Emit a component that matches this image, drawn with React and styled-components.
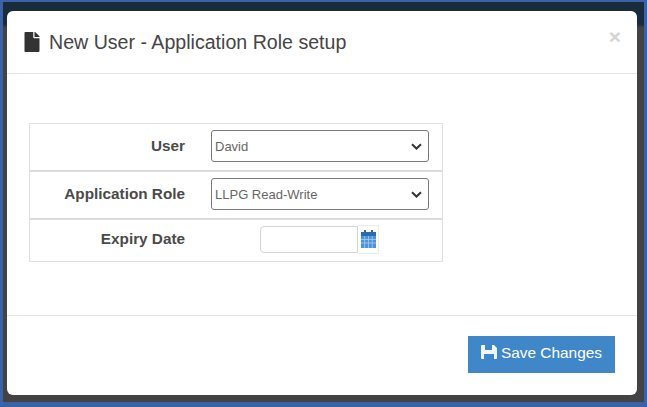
import React from "react";
import styled, { createGlobalStyle } from "styled-components";
import { FaFile } from "react-icons/fa";

const Global = createGlobalStyle`
html, body {
  margin: 0;
  padding: 0;
  background: #3a62a8;
}
* {
  box-sizing: border-box;
}
`

const Frame = styled.div`
width: 647px;
height: 407px;
border: solid #3a62a8;
border-width: 2px 3px 5px 3px;
padding: 9px 7px 7px 4px;
background: linear-gradient(#182c3e 0, #182c3e 22px, #434343 26px, #434343 100%);
font-family: "Liberation Sans", Arial, sans-serif;
overflow: hidden;
`

const Modal = styled.div`
width: 630px;
height: 384px;
background: #fff;
border-radius: 6px;
display: flex;
flex-direction: column;
`

const Header = styled.div`
height: 63px;
flex: none;
display: flex;
align-items: center;
padding: 0 16px 0 17px;
border-bottom: 1px solid #e5e5e5;
`

const TitleIcon = styled(FaFile)`
width: 16px;
height: 20px;
color: #333;
margin-right: 9px;
flex: none;
`

const Title = styled.h4`
margin: 0;
flex: 1;
font-size: 19.6px;
font-weight: 400;
color: #454545;
`

const Close = styled.span`
font-size: 21px;
font-weight: 700;
color: #d4d4d4;
line-height: 1;
margin-top: -12px;
`

const Body = styled.div`
flex: 1;
padding: 49px 0 0 22px;
`

const FormTable = styled.div`
width: 414px;
border: 1px solid #e0e0e0;
display: flex;
flex-direction: column;
`

const Row = styled.div`
height: ${(p) => p.$height}px;
display: grid;
grid-template-columns: 155px 1fr;
column-gap: 26px;
align-items: center;
padding-bottom: ${(p) => p.$lift}px;
border-top: ${(p) => (p.$first ? "none" : "2px solid #dcdcdc")};
`

const Label = styled.label`
text-align: right;
font-size: 15.3px;
font-weight: 700;
color: #4a4a4a;
`

const SelectBox = styled.div`
width: 218px;
height: 32px;
border: 1px solid #7a7a7a;
border-radius: 3px;
display: flex;
align-items: center;
justify-content: space-between;
padding: 0 6px 0 3px;
font-size: 13px;
color: #666;
`

const Chevron = styled.svg`
width: 11px;
height: 7px;
`

const DateCell = styled.div`
display: flex;
align-items: center;
margin-left: 49px;
`

const DateInput = styled.div`
width: 98px;
height: 27px;
border: 1px solid #d4d4d4;
border-radius: 4px 0 0 4px;
background: #fff;
`

const Addon = styled.div`
width: 21px;
height: 29px;
border: 1px solid #ececec;
border-left: none;
display: flex;
align-items: center;
justify-content: center;
`

const CalendarIcon = styled.svg`
width: 15px;
height: 18px;
`

const Footer = styled.div`
height: 80px;
flex: none;
border-top: 1px solid #e5e5e5;
display: flex;
justify-content: flex-end;
align-items: flex-start;
padding: 20px 22px 0 0;
`

const SaveButton = styled.button`
width: 147px;
height: 37px;
border: none;
background: #3f87c9;
color: #fff;
font-family: inherit;
font-size: 15.4px;
display: flex;
align-items: center;
justify-content: center;
gap: 4px;
padding: 0 0 3px;
`

const SaveIcon = styled.svg`
width: 16px;
height: 14px;
margin-top: -2px;
`

function Select({ value }) {
  return (
    <SelectBox>
      {value}
      <Chevron viewBox="0 0 11 7">
        <path d="M1 1.2 L5.5 5.5 L10 1.2" fill="none" stroke="#333" strokeWidth="2" />
      </Chevron>
    </SelectBox>
  );
}

function Calendar() {
  return (
    <CalendarIcon viewBox="0 0 15 18">
      <rect x="3" y="0" width="2" height="3" fill="#2a6cae" />
      <rect x="10" y="0" width="2" height="3" fill="#2a6cae" />
      <rect x="0" y="2" width="15" height="4" fill="#2a6cae" />
      <rect x="0" y="6" width="15" height="12" fill="#4c94d8" />
      <path d="M0 9.5H15M0 13H15M3.7 6V18M7.5 6V18M11.2 6V18" stroke="#a9cdee" strokeWidth="0.8" />
    </CalendarIcon>
  );
}

function Floppy() {
  return (
    <SaveIcon viewBox="0 0 16 14">
      <path d="M0 1 Q0 0 1 0 H4 V5 H11 V0 H13 L16 3 V13 Q16 14 15 14 H13 V9 H3 V14 H1 Q0 14 0 13 Z" fill="#eef6fc" />
    </SaveIcon>
  );
}

export default function App() {
  return (
    <Frame>
      <Global />
      <Modal>
        <Header>
          <TitleIcon />
          <Title>New User - Application Role setup</Title>
          <Close>×</Close>
        </Header>
        <Body>
          <FormTable>
            <Row $first $height={46} $lift={2}>
              <Label>User</Label>
              <Select value="David" />
            </Row>
            <Row $height={48} $lift={2}>
              <Label>Application Role</Label>
              <Select value="LLPG Read-Write" />
            </Row>
            <Row $height={43} $lift={3}>
              <Label>Expiry Date</Label>
              <DateCell>
                <DateInput />
                <Addon>
                  <Calendar />
                </Addon>
              </DateCell>
            </Row>
          </FormTable>
        </Body>
        <Footer>
          <SaveButton>
            <Floppy />
            Save Changes
          </SaveButton>
        </Footer>
      </Modal>
    </Frame>
  );
}
